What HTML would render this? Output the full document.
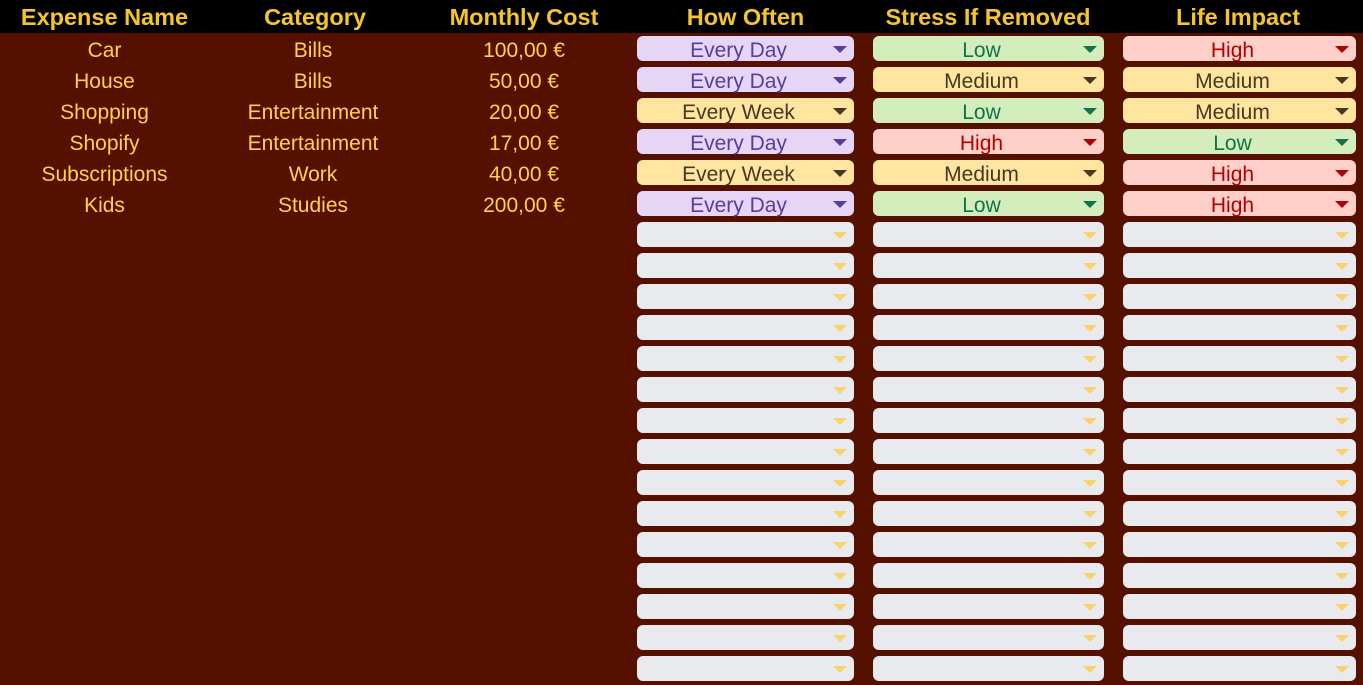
<!DOCTYPE html><html><head><style>
body{margin:0;width:1363px;height:685px;background:#561000;font-family:"Liberation Sans",Arial,sans-serif;overflow:hidden;position:relative}
.hdr{position:absolute;top:0;left:0;width:1363px;height:33px;background:#000}
.h{position:absolute;top:0;height:33px;line-height:35px;color:#f5c530;font-weight:bold;font-size:23.5px;text-align:center}
.t{position:absolute;height:31px;line-height:35px;color:#fcd34d;font-size:21px;text-align:center}
.p{position:absolute;height:25px;border-radius:6px;font-size:21px;line-height:29px;text-align:center;box-sizing:border-box;padding-right:14px}
.p:after{content:"";position:absolute;right:7px;top:10px;border-left:7px solid transparent;border-right:7px solid transparent;border-top:7px solid var(--a)}
.pu{background:#e6d5f5;color:#5b3c9b;--a:#5b3c9b}
.gr{background:#d4edbc;color:#11734b;--a:#11734b}
.ye{background:#ffe5a0;color:#473821;--a:#473821}
.re{background:#ffcfc9;color:#b10202;--a:#b10202}
.em{background:#e8eaed;--a:#f7d36b}
</style></head><body>
<div class="hdr"></div>
<div class="h" style="left:0;width:209px">Expense Name</div>
<div class="h" style="left:210px;width:210px">Category</div>
<div class="h" style="left:420px;width:208px">Monthly Cost</div>
<div class="h" style="left:628px;width:235px">How Often</div>
<div class="h" style="left:863px;width:250px">Stress If Removed</div>
<div class="h" style="left:1113px;width:250px">Life Impact</div>
<div id="r"></div>
<script>
const d=[["Car","Bills","100,00 €","pu","Every Day","gr","Low","re","High"],
["House","Bills","50,00 €","pu","Every Day","ye","Medium","ye","Medium"],
["Shopping","Entertainment","20,00 €","ye","Every Week","gr","Low","ye","Medium"],
["Shopify","Entertainment","17,00 €","pu","Every Day","re","High","gr","Low"],
["Subscriptions","Work","40,00 €","ye","Every Week","ye","Medium","re","High"],
["Kids","Studies","200,00 €","pu","Every Day","gr","Low","re","High"]];
let h="";
for(let i=0;i<21;i++){const y=33+i*31,r=d[i];
if(r){h+=`<div class="t" style="top:${y}px;left:0;width:209px">${r[0]}</div><div class="t" style="top:${y}px;left:210px;width:206px">${r[1]}</div><div class="t" style="top:${y}px;left:420px;width:208px">${r[2]}</div>`;}
const py=y+3;
h+=`<div class="p ${r?r[3]:'em'}" style="top:${py}px;left:637px;width:217px">${r?r[4]:''}</div>`;
h+=`<div class="p ${r?r[5]:'em'}" style="top:${py}px;left:873px;width:231px">${r?r[6]:''}</div>`;
h+=`<div class="p ${r?r[7]:'em'}" style="top:${py}px;left:1123px;width:233px">${r?r[8]:''}</div>`;}
document.getElementById("r").innerHTML=h;
</script>
</body></html>
